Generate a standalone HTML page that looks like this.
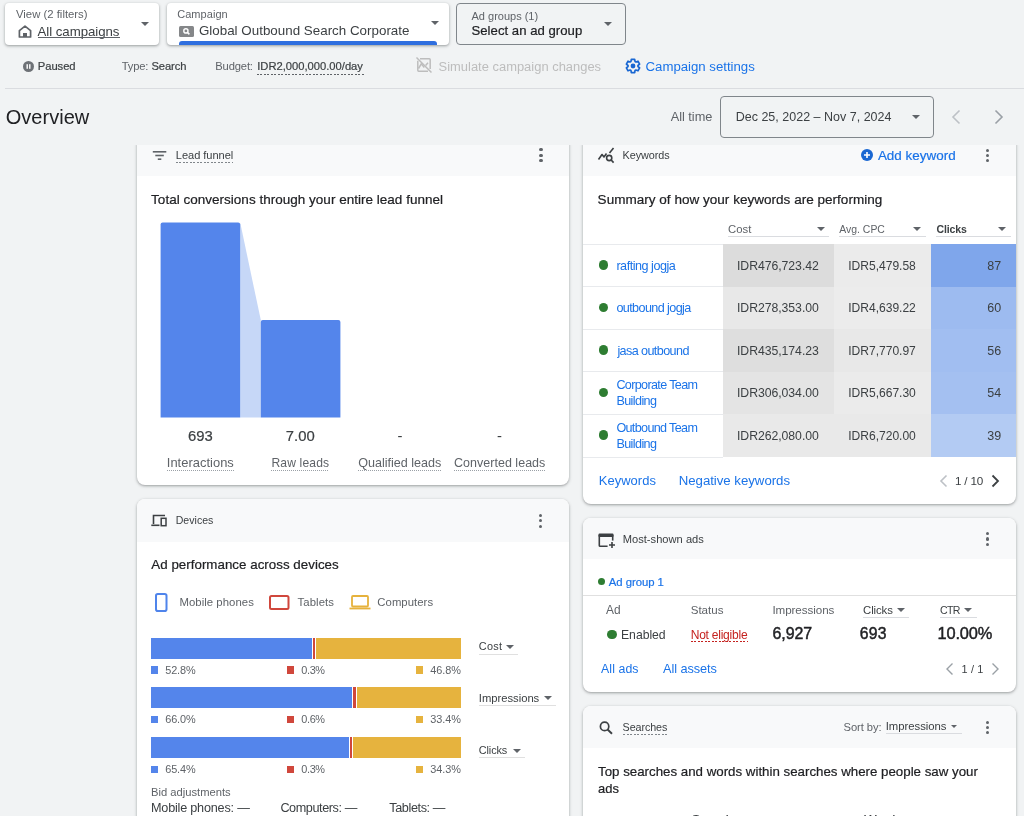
<!DOCTYPE html>
<html><head><meta charset="utf-8">
<style>
*{box-sizing:border-box;margin:0;padding:0}
html,body{width:1024px;height:816px;overflow:hidden;background:#f1f3f4;font-family:"Liberation Sans",sans-serif;color:#202124;-webkit-font-smoothing:antialiased}
#w{position:absolute;left:0;top:0;width:1024px;height:816px;will-change:transform}
.a{position:absolute}
.t{position:absolute;white-space:nowrap;line-height:1}
</style></head><body>
<div id="w"><div class="a" style="left:5px;top:3px;width:154px;height:42px;background:#fff;border-radius:4px;box-shadow:0 1px 2px 0 rgba(60,64,67,.3),0 1px 3px 1px rgba(60,64,67,.15);"></div>
<div class="t" style="left:16.00px;top:9.00px;font-size:11.34px;color:#5f6368;">View (2 filters)</div>
<svg class="a" style="left:18px;top:25px" width="14" height="13" viewBox="0 0 14 13"><path d="M7 1.2 L12.6 5.6 V12 H1.4 V5.6 Z" fill="none" stroke="#5f6368" stroke-width="1.7" stroke-linejoin="round"/><rect x="5" y="8" width="4" height="4" fill="#5f6368"/></svg>
<div class="t" style="left:37.60px;top:25.00px;font-size:13.24px;color:#3c4043;letter-spacing:-0.050px;">All campaigns</div>
<div class="a" style="left:37.6px;top:36.6px;width:82.4px;height:1px;background:#5f6368"></div>
<div class="a" style="left:141px;top:21.6px;width:0;height:0;border-left:4.349999999999994px solid transparent;border-right:4.349999999999994px solid transparent;border-top:4.349999999999994px solid #5f6368"></div>
<div class="a" style="left:167px;top:3px;width:282px;height:42px;background:#fff;border-radius:4px;overflow:hidden;box-shadow:0 1px 2px 0 rgba(60,64,67,.3),0 1px 3px 1px rgba(60,64,67,.15);"><div style="position:absolute;left:12px;width:258px;top:38.0px;height:6px;background:#2f6fdf;border-radius:3px 3px 0 0"></div></div>
<div class="t" style="left:177.20px;top:9.00px;font-size:10.99px;color:#5f6368;letter-spacing:0.057px;">Campaign</div>
<div class="a" style="left:179px;top:26px;width:14.5px;height:10.6px;background:#858789;border-radius:1.5px"></div>
<svg class="a" style="left:182px;top:27px" width="9" height="9" viewBox="0 0 9 9"><circle cx="3.9" cy="3.9" r="2.1" fill="none" stroke="#fff" stroke-width="1.4"/><path d="M5.4 5.4 L7.4 7.4" stroke="#fff" stroke-width="1.5"/></svg>
<div class="t" style="left:198.90px;top:24.00px;font-size:13.37px;color:#3c4043;letter-spacing:0.013px;">Global Outbound Search Corporate</div>
<div class="a" style="left:430.7px;top:21.1px;width:0;height:0;border-left:4.400000000000006px solid transparent;border-right:4.400000000000006px solid transparent;border-top:4.400000000000006px solid #5f6368"></div>
<div class="a" style="left:456.4px;top:2.6px;width:169.6px;height:42.1px;background:transparent;border:1px solid #80868b;border-radius:4px;"></div>
<div class="t" style="left:471.50px;top:11.00px;font-size:11.01px;color:#5f6368;">Ad groups (1)</div>
<div class="t" style="left:471.50px;top:24.00px;font-size:13.13px;color:#202124;letter-spacing:0.029px;-webkit-text-stroke:0.2px #202124;">Select an ad group</div>
<div class="a" style="left:603.6px;top:21.5px;width:0;height:0;border-left:4.0px solid transparent;border-right:4.0px solid transparent;border-top:4.0px solid #5f6368"></div>
<svg class="a" style="left:23px;top:61px" width="11" height="11" viewBox="0 0 11 11"><circle cx="5.5" cy="5.5" r="5.5" fill="#6d7176"/><rect x="3.5" y="3.2" width="1.4" height="4.6" fill="#fff"/><rect x="6.1" y="3.2" width="1.4" height="4.6" fill="#fff"/></svg>
<div class="t" style="left:37.80px;top:61.00px;font-size:11.22px;color:#3c4043;letter-spacing:-0.060px;-webkit-text-stroke:0.2px #3c4043;">Paused</div>
<div class="t" style="left:121.80px;top:61.00px;font-size:11.19px;color:#5f6368;letter-spacing:-0.200px;">Type:</div>
<div class="t" style="left:151.50px;top:61.00px;font-size:11.19px;color:#3c4043;letter-spacing:-0.100px;-webkit-text-stroke:0.2px #3c4043;">Search</div>
<div class="t" style="left:215.30px;top:61.00px;font-size:11.19px;color:#5f6368;letter-spacing:-0.150px;">Budget:</div>
<div class="t" style="left:257.20px;top:61.00px;font-size:11.19px;color:#3c4043;-webkit-text-stroke:0.2px #3c4043;">IDR2,000,000.00/day</div>
<div class="a" style="left:257px;top:74.2px;width:106.5px;height:1px;background:repeating-linear-gradient(90deg,#5f6368 0 2px,transparent 2px 3.5px)"></div>
<svg class="a" style="left:415px;top:56px" width="18" height="18" viewBox="0 0 18 18"><path d="M5 2.8 H14.3 Q15.2 2.8 15.2 3.7 V13" fill="none" stroke="#bdbdbd" stroke-width="1.5"/><path d="M2.8 4.8 V14.3 Q2.8 15.2 3.7 15.2 H13" fill="none" stroke="#bdbdbd" stroke-width="1.5"/><path d="M1.5 1.5 L16.5 16.5" stroke="#bdbdbd" stroke-width="1.5"/><path d="M3.5 12.5 L6.3 7.8 L9.3 11.5 M10.6 9.5 L13 6.8" fill="none" stroke="#bdbdbd" stroke-width="1.5"/></svg>
<div class="t" style="left:438.60px;top:61.00px;font-size:12.92px;color:#bdbdbd;letter-spacing:0.013px;">Simulate campaign changes</div>
<svg class="a" style="left:624.5px;top:58.3px" width="16" height="16" viewBox="0 0 16 16"><path d="M5.97 3.43 L6.33 1.30 L9.67 1.30 L10.03 3.43 L10.94 3.95 L12.96 3.21 L14.63 6.10 L12.97 7.48 L12.97 8.52 L14.63 9.90 L12.96 12.79 L10.94 12.05 L10.03 12.57 L9.67 14.70 L6.33 14.70 L5.97 12.57 L5.06 12.05 L3.04 12.79 L1.37 9.90 L3.03 8.52 L3.03 7.48 L1.37 6.10 L3.04 3.21 L5.06 3.95 Z" fill="none" stroke="#1967d2" stroke-width="1.7" stroke-linejoin="round"/><circle cx="8" cy="8" r="2.4" fill="#1967d2"/></svg>
<div class="t" style="left:645.60px;top:60.00px;font-size:13.22px;color:#1a73e8;letter-spacing:-0.019px;">Campaign settings</div>
<div class="a" style="left:5px;top:88px;width:1019px;height:1px;background:#dadce0"></div>
<div class="t" style="left:5.70px;top:107.00px;font-size:20.01px;color:#202124;letter-spacing:0.029px;">Overview</div>
<div class="t" style="left:670.70px;top:111.00px;font-size:12.76px;color:#5f6368;letter-spacing:-0.014px;">All time</div>
<div class="a" style="left:720.4px;top:96px;width:214px;height:41.6px;background:transparent;border:1px solid #80868b;border-radius:4px;"></div>
<div class="t" style="left:735.70px;top:111.00px;font-size:12.49px;color:#3c4043;letter-spacing:0.012px;">Dec 25, 2022 – Nov 7, 2024</div>
<div class="a" style="left:911.7px;top:115.2px;width:0;height:0;border-left:4.7999999999999545px solid transparent;border-right:4.7999999999999545px solid transparent;border-top:4.7999999999999545px solid #5f6368"></div>
<svg class="a" style="left:950px;top:109px" width="12" height="16" viewBox="0 0 12 16"><path d="M9.5 1.5 L3 8 L9.5 14.5" fill="none" stroke="#bdc1c6" stroke-width="1.6"/></svg>
<svg class="a" style="left:993px;top:109px" width="12" height="16" viewBox="0 0 12 16"><path d="M2.5 1.5 L9 8 L2.5 14.5" fill="none" stroke="#9aa0a6" stroke-width="1.6"/></svg>
<div class="a" style="left:0;top:0;width:1024px;height:816px;clip-path:inset(145px 0 0 0)">
<div class="a" style="left:136.5px;top:137px;width:432.5px;height:347.5px;background:#fff;border-radius:8px;overflow:hidden;box-shadow:0 1px 2px 0 rgba(60,64,67,.3),0 1px 3px 1px rgba(60,64,67,.15);"></div>
<div class="a" style="left:136.5px;top:137px;width:432.5px;height:39px;background:#f8f9fa;border-radius:8px 8px 0 0;"></div>
<svg class="a" style="left:152px;top:150px" width="15" height="11" viewBox="0 0 15 11"><rect x="0.8" y="1" width="13.5" height="1.6" fill="#5f6368"/><rect x="3.3" y="4.7" width="8.5" height="1.6" fill="#5f6368"/><rect x="5.8" y="8.4" width="3.5" height="1.6" fill="#5f6368"/></svg>
<div class="t" style="left:175.80px;top:150.00px;font-size:11.07px;color:#3c4043;letter-spacing:-0.040px;">Lead funnel</div>
<div class="a" style="left:175.8px;top:161.5px;width:57.599999999999994px;height:1px;background:repeating-linear-gradient(90deg,#80868b 0 2px,transparent 2px 3.5px)"></div>
<div class="a" style="left:539.45px;top:148.40px;width:3.1px;height:3.1px;border-radius:50%;background:#5f6368"></div>
<div class="a" style="left:539.45px;top:153.65px;width:3.1px;height:3.1px;border-radius:50%;background:#5f6368"></div>
<div class="a" style="left:539.45px;top:158.90px;width:3.1px;height:3.1px;border-radius:50%;background:#5f6368"></div>
<div class="t" style="left:151.10px;top:193.00px;font-size:13.51px;color:#202124;letter-spacing:0.015px;-webkit-text-stroke:0.2px #202124;">Total conversions through your entire lead funnel</div>
<svg class="a" style="left:0;top:0" width="1024" height="816"><path d="M240.2 222.6 L260.8 320.1 L260.8 417.6 L240.2 417.6 Z" fill="#c6d7f7"/><path d="M160.6 417.6 V224.6 Q160.6 222.6 162.6 222.6 H238.2 Q240.2 222.6 240.2 224.6 V417.6 Z" fill="#5485eb"/><path d="M260.8 417.6 V322.1 Q260.8 320.1 262.8 320.1 H338.4 Q340.4 320.1 340.4 322.1 V417.6 Z" fill="#5485eb"/></svg>
<div class="t" style="left:187.90px;top:429.00px;font-size:14.83px;color:#3c4043;-webkit-text-stroke:0.2px #3c4043;">693</div>
<div class="t" style="left:285.80px;top:429.00px;font-size:14.83px;color:#3c4043;-webkit-text-stroke:0.2px #3c4043;">7.00</div>
<div class="t" style="left:397.50px;top:429.00px;font-size:14.83px;color:#3c4043;">-</div>
<div class="t" style="left:496.90px;top:429.00px;font-size:14.83px;color:#3c4043;">-</div>
<div class="t" style="left:166.80px;top:457.00px;font-size:12.93px;color:#5f6368;letter-spacing:0.018px;">Interactions</div>
<div class="a" style="left:166.8px;top:469.5px;width:67.19999999999999px;height:1px;background:repeating-linear-gradient(90deg,#9aa0a6 0 1px,transparent 1px 2px)"></div>
<div class="t" style="left:271.40px;top:457.00px;font-size:12.09px;color:#5f6368;letter-spacing:0.163px;">Raw leads</div>
<div class="a" style="left:271.4px;top:469.5px;width:57.30000000000001px;height:1px;background:repeating-linear-gradient(90deg,#9aa0a6 0 1px,transparent 1px 2px)"></div>
<div class="t" style="left:358.30px;top:457.00px;font-size:12.59px;color:#5f6368;letter-spacing:-0.021px;">Qualified leads</div>
<div class="a" style="left:358.3px;top:469.5px;width:83.69999999999999px;height:1px;background:repeating-linear-gradient(90deg,#9aa0a6 0 1px,transparent 1px 2px)"></div>
<div class="t" style="left:454.00px;top:457.00px;font-size:12.47px;color:#5f6368;letter-spacing:0.036px;">Converted leads</div>
<div class="a" style="left:454px;top:469.5px;width:91.5px;height:1px;background:repeating-linear-gradient(90deg,#9aa0a6 0 1px,transparent 1px 2px)"></div>
<div class="a" style="left:582.5px;top:137px;width:433.5px;height:366.5px;background:#fff;border-radius:8px;overflow:hidden;box-shadow:0 1px 2px 0 rgba(60,64,67,.3),0 1px 3px 1px rgba(60,64,67,.15);"></div>
<div class="a" style="left:582.5px;top:137px;width:433.5px;height:39px;background:#f8f9fa;border-radius:8px 8px 0 0;"></div>
<svg class="a" style="left:597px;top:147px" width="19" height="17" viewBox="0 0 19 17"><path d="M1.5 12.5 L5 7.5 L7 10 L9.5 6.5" fill="none" stroke="#3c4043" stroke-width="1.6" stroke-linejoin="round"/><path d="M12.5 6 L16.5 1" fill="none" stroke="#3c4043" stroke-width="1.6"/><circle cx="12.2" cy="11" r="2.6" fill="none" stroke="#3c4043" stroke-width="1.6"/><path d="M14.2 13 L16.6 15.6" stroke="#3c4043" stroke-width="1.7"/></svg>
<div class="t" style="left:622.50px;top:150.00px;font-size:10.82px;color:#3c4043;letter-spacing:-0.043px;">Keywords</div>
<svg class="a" style="left:860.5px;top:149px" width="12" height="12" viewBox="0 0 12 12"><circle cx="6" cy="6" r="6" fill="#1967d2"/><path d="M6 3 V9 M3 6 H9" stroke="#fff" stroke-width="1.6"/></svg>
<div class="t" style="left:877.90px;top:149.00px;font-size:13.41px;color:#1a73e8;letter-spacing:0.020px;-webkit-text-stroke:0.2px #1a73e8;">Add keyword</div>
<div class="a" style="left:985.95px;top:148.60px;width:3.1px;height:3.1px;border-radius:50%;background:#5f6368"></div>
<div class="a" style="left:985.95px;top:153.65px;width:3.1px;height:3.1px;border-radius:50%;background:#5f6368"></div>
<div class="a" style="left:985.95px;top:158.70px;width:3.1px;height:3.1px;border-radius:50%;background:#5f6368"></div>
<div class="t" style="left:597.60px;top:193.00px;font-size:13.52px;color:#202124;letter-spacing:0.017px;-webkit-text-stroke:0.2px #202124;">Summary of how your keywords are performing</div>
<div class="t" style="left:728.00px;top:224.00px;font-size:11.34px;color:#5f6368;">Cost</div>
<div class="a" style="left:728px;top:236px;width:100.60000000000002px;height:1px;background:#dadce0"></div>
<div class="a" style="left:816.8px;top:226.8px;width:0;height:0;border-left:4.100000000000023px solid transparent;border-right:4.100000000000023px solid transparent;border-top:4.100000000000023px solid #5f6368"></div>
<div class="t" style="left:839.30px;top:225.00px;font-size:10.43px;color:#5f6368;">Avg. CPC</div>
<div class="a" style="left:839px;top:236px;width:86.70000000000005px;height:1px;background:#dadce0"></div>
<div class="a" style="left:913px;top:226.8px;width:0;height:0;border-left:4.25px solid transparent;border-right:4.25px solid transparent;border-top:4.25px solid #5f6368"></div>
<div class="t" style="left:936.40px;top:224.00px;font-size:10.51px;color:#3c4043;letter-spacing:-0.080px;font-weight:bold;">Clicks</div>
<div class="a" style="left:936px;top:236px;width:74.5px;height:1px;background:#dadce0"></div>
<div class="a" style="left:998px;top:226.8px;width:0;height:0;border-left:4.5px solid transparent;border-right:4.5px solid transparent;border-top:4.5px solid #5f6368"></div>
<div class="a" style="left:582.5px;top:243.5px;width:433.5px;height:1px;background:#e8eaed"></div>
<div class="a" style="left:722.7px;top:244.0px;width:111px;height:42.7px;background:#dcdcdc;"></div>
<div class="a" style="left:833.7px;top:244.0px;width:97.3px;height:42.7px;background:#ebebeb;"></div>
<div class="a" style="left:931px;top:244.0px;width:85px;height:42.7px;background:#7fa6eb;"></div>
<div class="a" style="left:598.60px;top:259.90px;width:9.8px;height:9.8px;border-radius:50%;background:#2e7d32"></div>
<div class="t" style="left:616.40px;top:260.00px;font-size:12.60px;color:#1a73e8;letter-spacing:-0.475px;">rafting jogja</div>
<div class="t" style="left:737.00px;top:260.00px;font-size:12.26px;color:#3c4043;letter-spacing:-0.050px;">IDR476,723.42</div>
<div class="t" style="left:848.30px;top:260.00px;font-size:12.09px;color:#3c4043;letter-spacing:-0.030px;">IDR5,479.58</div>
<div class="t" style="left:987.30px;top:260.00px;font-size:12.50px;color:#3c4043;">87</div>
<div class="a" style="left:722.7px;top:286.6px;width:111px;height:42.7px;background:#e8e8e8;"></div>
<div class="a" style="left:833.7px;top:286.6px;width:97.3px;height:42.7px;background:#ececec;"></div>
<div class="a" style="left:931px;top:286.6px;width:85px;height:42.7px;background:#9dbbf0;"></div>
<div class="a" style="left:582.5px;top:286.1px;width:140.20000000000005px;height:1px;background:#e8eaed"></div>
<div class="a" style="left:598.60px;top:302.50px;width:9.8px;height:9.8px;border-radius:50%;background:#2e7d32"></div>
<div class="t" style="left:616.40px;top:302.00px;font-size:12.60px;color:#1a73e8;letter-spacing:-0.592px;">outbound jogja</div>
<div class="t" style="left:737.00px;top:302.00px;font-size:12.26px;color:#3c4043;letter-spacing:-0.050px;">IDR278,353.00</div>
<div class="t" style="left:848.30px;top:302.00px;font-size:12.09px;color:#3c4043;letter-spacing:-0.030px;">IDR4,639.22</div>
<div class="t" style="left:987.30px;top:302.00px;font-size:12.50px;color:#3c4043;">60</div>
<div class="a" style="left:722.7px;top:329.2px;width:111px;height:42.7px;background:#dedede;"></div>
<div class="a" style="left:833.7px;top:329.2px;width:97.3px;height:42.7px;background:#e8e8e8;"></div>
<div class="a" style="left:931px;top:329.2px;width:85px;height:42.7px;background:#a1bef1;"></div>
<div class="a" style="left:582.5px;top:328.7px;width:140.20000000000005px;height:1px;background:#e8eaed"></div>
<div class="a" style="left:598.60px;top:345.10px;width:9.8px;height:9.8px;border-radius:50%;background:#2e7d32"></div>
<div class="t" style="left:617.40px;top:345.00px;font-size:12.60px;color:#1a73e8;letter-spacing:-0.592px;">jasa outbound</div>
<div class="t" style="left:737.00px;top:345.00px;font-size:12.26px;color:#3c4043;letter-spacing:-0.050px;">IDR435,174.23</div>
<div class="t" style="left:848.30px;top:345.00px;font-size:12.09px;color:#3c4043;letter-spacing:-0.030px;">IDR7,770.97</div>
<div class="t" style="left:987.30px;top:345.00px;font-size:12.50px;color:#3c4043;">56</div>
<div class="a" style="left:722.7px;top:371.8px;width:111px;height:42.7px;background:#e4e4e4;"></div>
<div class="a" style="left:833.7px;top:371.8px;width:97.3px;height:42.7px;background:#ebebeb;"></div>
<div class="a" style="left:931px;top:371.8px;width:85px;height:42.7px;background:#a4c0f1;"></div>
<div class="a" style="left:582.5px;top:371.3px;width:140.20000000000005px;height:1px;background:#e8eaed"></div>
<div class="a" style="left:598.60px;top:387.70px;width:9.8px;height:9.8px;border-radius:50%;background:#2e7d32"></div>
<div class="t" style="left:616.40px;top:379.00px;font-size:12.60px;color:#1a73e8;letter-spacing:-0.646px;">Corporate Team</div>
<div class="t" style="left:616.40px;top:395.00px;font-size:12.60px;color:#1a73e8;letter-spacing:-0.600px;">Building</div>
<div class="t" style="left:737.00px;top:387.00px;font-size:12.26px;color:#3c4043;letter-spacing:-0.050px;">IDR306,034.00</div>
<div class="t" style="left:848.30px;top:387.00px;font-size:12.09px;color:#3c4043;letter-spacing:-0.030px;">IDR5,667.30</div>
<div class="t" style="left:987.30px;top:387.00px;font-size:12.50px;color:#3c4043;">54</div>
<div class="a" style="left:722.7px;top:414.4px;width:111px;height:42.7px;background:#e9e9e9;"></div>
<div class="a" style="left:833.7px;top:414.4px;width:97.3px;height:42.7px;background:#e9e9e9;"></div>
<div class="a" style="left:931px;top:414.4px;width:85px;height:42.7px;background:#b3cbf3;"></div>
<div class="a" style="left:582.5px;top:413.9px;width:140.20000000000005px;height:1px;background:#e8eaed"></div>
<div class="a" style="left:598.60px;top:430.30px;width:9.8px;height:9.8px;border-radius:50%;background:#2e7d32"></div>
<div class="t" style="left:616.40px;top:422.00px;font-size:12.60px;color:#1a73e8;letter-spacing:-0.658px;">Outbound Team</div>
<div class="t" style="left:616.40px;top:438.00px;font-size:12.60px;color:#1a73e8;letter-spacing:-0.600px;">Building</div>
<div class="t" style="left:737.00px;top:430.00px;font-size:12.26px;color:#3c4043;letter-spacing:-0.050px;">IDR262,080.00</div>
<div class="t" style="left:848.30px;top:430.00px;font-size:12.09px;color:#3c4043;letter-spacing:-0.030px;">IDR6,720.00</div>
<div class="t" style="left:987.30px;top:430.00px;font-size:12.50px;color:#3c4043;">39</div>
<div class="a" style="left:582.5px;top:457px;width:140.20000000000005px;height:1px;background:#e8eaed"></div>
<div class="t" style="left:598.80px;top:475.00px;font-size:12.96px;color:#1a73e8;letter-spacing:0.029px;">Keywords</div>
<div class="t" style="left:678.70px;top:474.00px;font-size:13.22px;color:#1a73e8;letter-spacing:-0.019px;">Negative keywords</div>
<svg class="a" style="left:938px;top:474px" width="11" height="14" viewBox="0 0 11 14"><path d="M8.5 1.5 L3 7 L8.5 12.5" fill="none" stroke="#bdc1c6" stroke-width="1.6"/></svg>
<div class="t" style="left:955.00px;top:475.00px;font-size:11.69px;color:#3c4043;letter-spacing:-0.200px;">1 / 10</div>
<svg class="a" style="left:990px;top:474px" width="11" height="14" viewBox="0 0 11 14"><path d="M2.5 1.5 L8 7 L2.5 12.5" fill="none" stroke="#3c4043" stroke-width="1.8"/></svg>
<div class="a" style="left:136.5px;top:499.2px;width:432.5px;height:340px;background:#fff;border-radius:8px;overflow:hidden;box-shadow:0 1px 2px 0 rgba(60,64,67,.3),0 1px 3px 1px rgba(60,64,67,.15);"></div>
<div class="a" style="left:136.5px;top:499.2px;width:432.5px;height:42.5px;background:#f8f9fa;border-radius:8px 8px 0 0;"></div>
<svg class="a" style="left:151px;top:514px" width="16" height="13" viewBox="0 0 16 13"><path d="M2.5 10 V1.5 H14" fill="none" stroke="#3c4043" stroke-width="1.6"/><path d="M0.3 11.3 H8.5" stroke="#3c4043" stroke-width="1.6"/><rect x="10.2" y="4.3" width="4.8" height="7.4" fill="none" stroke="#3c4043" stroke-width="1.5"/></svg>
<div class="t" style="left:175.70px;top:515.00px;font-size:10.56px;color:#3c4043;letter-spacing:0.033px;">Devices</div>
<div class="a" style="left:539.05px;top:513.70px;width:3.1px;height:3.1px;border-radius:50%;background:#5f6368"></div>
<div class="a" style="left:539.05px;top:519.20px;width:3.1px;height:3.1px;border-radius:50%;background:#5f6368"></div>
<div class="a" style="left:539.05px;top:524.70px;width:3.1px;height:3.1px;border-radius:50%;background:#5f6368"></div>
<div class="t" style="left:151.30px;top:558.00px;font-size:13.34px;color:#202124;letter-spacing:0.025px;-webkit-text-stroke:0.2px #202124;">Ad performance across devices</div>
<svg class="a" style="left:155px;top:592.5px" width="13" height="19" viewBox="0 0 13 19"><rect x="1" y="1" width="10.5" height="17" rx="1.8" fill="none" stroke="#4f84eb" stroke-width="2"/></svg>
<div class="t" style="left:179.40px;top:597.00px;font-size:11.37px;color:#5f6368;letter-spacing:0.050px;">Mobile phones</div>
<svg class="a" style="left:269px;top:594.5px" width="21" height="15" viewBox="0 0 21 15"><rect x="1" y="1" width="18.5" height="13" rx="1.5" fill="none" stroke="#d0473c" stroke-width="2"/></svg>
<div class="t" style="left:297.60px;top:597.00px;font-size:11.34px;color:#5f6368;letter-spacing:0.067px;">Tablets</div>
<svg class="a" style="left:348.5px;top:595px" width="22" height="15" viewBox="0 0 22 15"><rect x="3" y="1" width="16" height="10.5" rx="1" fill="none" stroke="#e6b23c" stroke-width="1.8"/><rect x="0.5" y="12.6" width="21" height="1.8" fill="#e6b23c"/></svg>
<div class="t" style="left:377.30px;top:597.00px;font-size:11.34px;color:#5f6368;letter-spacing:0.050px;">Computers</div>
<div class="a" style="left:151.3px;top:638px;width:160.7px;height:20.899999999999977px;background:#5485eb;"></div>
<div class="a" style="left:312px;top:638px;width:3.5px;height:20.899999999999977px;background:#fff;"></div>
<div class="a" style="left:312.8px;top:638px;width:1.9px;height:20.899999999999977px;background:#d0473c;"></div>
<div class="a" style="left:315.5px;top:638px;width:145.60000000000002px;height:20.899999999999977px;background:#e6b33e;"></div>
<div class="a" style="left:150.7px;top:666.3000000000001px;width:7.3px;height:7.3px;background:#5485eb;"></div>
<div class="t" style="left:165.20px;top:665.00px;font-size:10.90px;color:#5f6368;letter-spacing:-0.100px;">52.8%</div>
<div class="a" style="left:287px;top:666.3000000000001px;width:7.3px;height:7.3px;background:#d0473c;"></div>
<div class="t" style="left:301.30px;top:665.00px;font-size:10.90px;color:#5f6368;letter-spacing:-0.367px;">0.3%</div>
<div class="a" style="left:415.8px;top:666.3000000000001px;width:7.3px;height:7.3px;background:#e6b33e;"></div>
<div class="t" style="left:430.30px;top:665.00px;font-size:10.90px;color:#5f6368;letter-spacing:-0.050px;">46.8%</div>
<div class="t" style="left:478.80px;top:641.00px;font-size:10.90px;color:#3c4043;letter-spacing:0.267px;">Cost</div>
<div class="a" style="left:506px;top:644.9000000000001px;width:0;height:0;border-left:4.0px solid transparent;border-right:4.0px solid transparent;border-top:4.0px solid #5f6368"></div>
<div class="a" style="left:478.8px;top:653.8000000000001px;width:38.900000000000034px;height:1px;background:#e0e0e0"></div>
<div class="a" style="left:151.3px;top:687.4px;width:200.7px;height:21.0px;background:#5485eb;"></div>
<div class="a" style="left:352px;top:687.4px;width:4.5px;height:21.0px;background:#fff;"></div>
<div class="a" style="left:352.8px;top:687.4px;width:2.9px;height:21.0px;background:#d0473c;"></div>
<div class="a" style="left:356.5px;top:687.4px;width:104.60000000000002px;height:21.0px;background:#e6b33e;"></div>
<div class="a" style="left:150.7px;top:715.8000000000001px;width:7.3px;height:7.3px;background:#5485eb;"></div>
<div class="t" style="left:165.20px;top:714.00px;font-size:10.90px;color:#5f6368;letter-spacing:-0.100px;">66.0%</div>
<div class="a" style="left:287px;top:715.8000000000001px;width:7.3px;height:7.3px;background:#d0473c;"></div>
<div class="t" style="left:301.30px;top:714.00px;font-size:10.90px;color:#5f6368;letter-spacing:-0.367px;">0.6%</div>
<div class="a" style="left:415.8px;top:715.8000000000001px;width:7.3px;height:7.3px;background:#e6b33e;"></div>
<div class="t" style="left:430.30px;top:714.00px;font-size:10.90px;color:#5f6368;letter-spacing:-0.050px;">33.4%</div>
<div class="t" style="left:478.80px;top:693.00px;font-size:11.25px;color:#3c4043;letter-spacing:-0.020px;">Impressions</div>
<div class="a" style="left:544px;top:696.4000000000001px;width:0;height:0;border-left:4.0px solid transparent;border-right:4.0px solid transparent;border-top:4.0px solid #5f6368"></div>
<div class="a" style="left:478.8px;top:705.3000000000001px;width:76.99999999999994px;height:1px;background:#e0e0e0"></div>
<div class="a" style="left:151.3px;top:736.9px;width:197.8px;height:21.300000000000068px;background:#5485eb;"></div>
<div class="a" style="left:349.1px;top:736.9px;width:3.8999999999999773px;height:21.300000000000068px;background:#fff;"></div>
<div class="a" style="left:349.90000000000003px;top:736.9px;width:2.299999999999977px;height:21.300000000000068px;background:#d0473c;"></div>
<div class="a" style="left:353px;top:736.9px;width:108.10000000000002px;height:21.300000000000068px;background:#e6b33e;"></div>
<div class="a" style="left:150.7px;top:765.6000000000001px;width:7.3px;height:7.3px;background:#5485eb;"></div>
<div class="t" style="left:165.20px;top:764.00px;font-size:10.90px;color:#5f6368;letter-spacing:-0.100px;">65.4%</div>
<div class="a" style="left:287px;top:765.6000000000001px;width:7.3px;height:7.3px;background:#d0473c;"></div>
<div class="t" style="left:301.30px;top:764.00px;font-size:10.90px;color:#5f6368;letter-spacing:-0.367px;">0.3%</div>
<div class="a" style="left:415.8px;top:765.6000000000001px;width:7.3px;height:7.3px;background:#e6b33e;"></div>
<div class="t" style="left:430.30px;top:764.00px;font-size:10.90px;color:#5f6368;letter-spacing:-0.050px;">34.3%</div>
<div class="t" style="left:478.80px;top:745.00px;font-size:10.90px;color:#3c4043;letter-spacing:-0.120px;">Clicks</div>
<div class="a" style="left:512.9px;top:748.5px;width:0;height:0;border-left:4.0px solid transparent;border-right:4.0px solid transparent;border-top:4.0px solid #5f6368"></div>
<div class="a" style="left:478.8px;top:757.4px;width:46.19999999999999px;height:1px;background:#e0e0e0"></div>
<div class="t" style="left:151.00px;top:787.00px;font-size:11.20px;color:#5f6368;">Bid adjustments</div>
<div class="t" style="left:151.00px;top:802.00px;font-size:12.65px;color:#3c4043;letter-spacing:-0.207px;">Mobile phones: —</div>
<div class="t" style="left:280.40px;top:802.00px;font-size:12.65px;color:#3c4043;letter-spacing:-0.418px;">Computers: —</div>
<div class="t" style="left:389.30px;top:802.00px;font-size:12.65px;color:#3c4043;letter-spacing:-0.389px;">Tablets: —</div>
<div class="a" style="left:582.5px;top:518.1px;width:433.5px;height:173.6px;background:#fff;border-radius:8px;overflow:hidden;box-shadow:0 1px 2px 0 rgba(60,64,67,.3),0 1px 3px 1px rgba(60,64,67,.15);"></div>
<div class="a" style="left:582.5px;top:518.1px;width:433.5px;height:41.3px;background:#f8f9fa;border-radius:8px 8px 0 0;"></div>
<svg class="a" style="left:597.5px;top:532.5px" width="18" height="15" viewBox="0 0 18 15"><rect x="0.5" y="0.5" width="15" height="3.4" rx="1" fill="#3c4043"/><path d="M1.3 2 V12.4 Q1.3 13.2 2.1 13.2 H9.6" fill="none" stroke="#3c4043" stroke-width="1.6"/><path d="M14.7 2 V7.6" fill="none" stroke="#3c4043" stroke-width="1.6"/><path d="M14 9 V15 M11 12 H17" stroke="#3c4043" stroke-width="1.6"/></svg>
<div class="t" style="left:622.70px;top:534.00px;font-size:11.11px;color:#3c4043;letter-spacing:0.023px;">Most-shown ads</div>
<div class="a" style="left:985.95px;top:532.00px;width:3.1px;height:3.1px;border-radius:50%;background:#5f6368"></div>
<div class="a" style="left:985.95px;top:537.45px;width:3.1px;height:3.1px;border-radius:50%;background:#5f6368"></div>
<div class="a" style="left:985.95px;top:542.90px;width:3.1px;height:3.1px;border-radius:50%;background:#5f6368"></div>
<div class="a" style="left:597.60px;top:578.00px;width:7px;height:7px;border-radius:50%;background:#2e7d32"></div>
<div class="t" style="left:608.80px;top:577.00px;font-size:11.34px;color:#1a73e8;letter-spacing:-0.033px;-webkit-text-stroke:0.2px #1a73e8;">Ad group 1</div>
<div class="a" style="left:582.5px;top:595px;width:433.5px;height:1px;background:#e0e0e0"></div>
<div class="t" style="left:606.00px;top:605.00px;font-size:11.92px;color:#5f6368;">Ad</div>
<div class="t" style="left:690.70px;top:605.00px;font-size:11.57px;color:#5f6368;">Status</div>
<div class="t" style="left:772.40px;top:604.00px;font-size:11.62px;color:#5f6368;letter-spacing:-0.060px;">Impressions</div>
<div class="t" style="left:863.10px;top:605.00px;font-size:11.36px;color:#3c4043;letter-spacing:-0.100px;">Clicks</div>
<div class="a" style="left:896.6px;top:608px;width:0;height:0;border-left:4.550000000000011px solid transparent;border-right:4.550000000000011px solid transparent;border-top:4.550000000000011px solid #5f6368"></div>
<div class="a" style="left:863px;top:617px;width:46px;height:1px;background:#dadce0"></div>
<div class="t" style="left:940.00px;top:605.00px;font-size:10.61px;color:#3c4043;letter-spacing:-0.750px;">CTR</div>
<div class="a" style="left:964.4px;top:608px;width:0;height:0;border-left:4.100000000000023px solid transparent;border-right:4.100000000000023px solid transparent;border-top:4.100000000000023px solid #5f6368"></div>
<div class="a" style="left:940px;top:617px;width:36.5px;height:1px;background:#dadce0"></div>
<div class="a" style="left:607.00px;top:629.80px;width:9.6px;height:9.6px;border-radius:50%;background:#2e7d32"></div>
<div class="t" style="left:621.00px;top:629.00px;font-size:12.23px;color:#3c4043;letter-spacing:-0.033px;">Enabled</div>
<div class="t" style="left:690.70px;top:629.00px;font-size:12.06px;color:#c5221f;letter-spacing:-0.245px;">Not eligible</div>
<div class="a" style="left:690.7px;top:641.3px;width:57.299999999999955px;height:1px;background:repeating-linear-gradient(90deg,#c5221f 0 2px,transparent 2px 3.5px)"></div>
<div class="t" style="left:772.40px;top:626.00px;font-size:15.95px;color:#202124;letter-spacing:-0.025px;-webkit-text-stroke:0.45px #202124;">6,927</div>
<div class="t" style="left:859.80px;top:626.00px;font-size:15.69px;color:#202124;letter-spacing:0.250px;-webkit-text-stroke:0.45px #202124;">693</div>
<div class="t" style="left:937.40px;top:625.00px;font-size:16.40px;color:#202124;letter-spacing:-0.120px;-webkit-text-stroke:0.45px #202124;">10.00%</div>
<div class="t" style="left:601.00px;top:663.00px;font-size:12.30px;color:#1a73e8;letter-spacing:0.100px;">All ads</div>
<div class="t" style="left:663.00px;top:663.00px;font-size:12.73px;color:#1a73e8;letter-spacing:-0.056px;">All assets</div>
<svg class="a" style="left:944px;top:662px" width="11" height="14" viewBox="0 0 11 14"><path d="M8.5 1.5 L3 7 L8.5 12.5" fill="none" stroke="#9aa0a6" stroke-width="1.4"/></svg>
<div class="t" style="left:961.60px;top:664.00px;font-size:10.90px;color:#3c4043;letter-spacing:0.100px;">1 / 1</div>
<svg class="a" style="left:989.5px;top:662px" width="11" height="14" viewBox="0 0 11 14"><path d="M2.5 1.5 L8 7 L2.5 12.5" fill="none" stroke="#9aa0a6" stroke-width="1.4"/></svg>
<div class="a" style="left:582.5px;top:706.3px;width:433.5px;height:200px;background:#fff;border-radius:8px;overflow:hidden;box-shadow:0 1px 2px 0 rgba(60,64,67,.3),0 1px 3px 1px rgba(60,64,67,.15);"></div>
<div class="a" style="left:582.5px;top:706.3px;width:433.5px;height:41.6px;background:#f8f9fa;border-radius:8px 8px 0 0;"></div>
<svg class="a" style="left:599px;top:721px" width="15" height="14" viewBox="0 0 15 14"><circle cx="5.6" cy="5.4" r="4.2" fill="none" stroke="#3c4043" stroke-width="1.7"/><path d="M8.6 8.5 L13 12.8" stroke="#3c4043" stroke-width="1.9"/></svg>
<div class="t" style="left:622.60px;top:722.00px;font-size:10.72px;color:#3c4043;letter-spacing:-0.086px;">Searches</div>
<div class="a" style="left:622.6px;top:733.5px;width:45.39999999999998px;height:1px;background:repeating-linear-gradient(90deg,#80868b 0 2px,transparent 2px 3.5px)"></div>
<div class="t" style="left:843.50px;top:722.00px;font-size:11.19px;color:#5f6368;letter-spacing:-0.071px;">Sort by:</div>
<div class="t" style="left:885.70px;top:721.00px;font-size:11.32px;color:#3c4043;letter-spacing:-0.020px;">Impressions</div>
<div class="a" style="left:950.9px;top:724.5px;width:0;height:0;border-left:3.9499999999999886px solid transparent;border-right:3.9499999999999886px solid transparent;border-top:3.9499999999999886px solid #5f6368"></div>
<div class="a" style="left:885.7px;top:733.3px;width:76.69999999999993px;height:1px;background:#dadce0"></div>
<div class="a" style="left:986.15px;top:720.50px;width:3.1px;height:3.1px;border-radius:50%;background:#5f6368"></div>
<div class="a" style="left:986.15px;top:725.65px;width:3.1px;height:3.1px;border-radius:50%;background:#5f6368"></div>
<div class="a" style="left:986.15px;top:730.80px;width:3.1px;height:3.1px;border-radius:50%;background:#5f6368"></div>
<div class="t" style="left:598.00px;top:765.00px;font-size:13.31px;color:#202124;-webkit-text-stroke:0.2px #202124;">Top searches and words within searches where people saw your</div>
<div class="t" style="left:598.00px;top:783.00px;font-size:12.94px;color:#202124;-webkit-text-stroke:0.2px #202124;">ads</div>
<div class="t" style="left:691.70px;top:813.00px;font-size:13.08px;color:#3c4043;-webkit-text-stroke:0.2px #3c4043;">Search</div>
<div class="t" style="left:864.30px;top:813.00px;font-size:13.08px;color:#3c4043;-webkit-text-stroke:0.2px #3c4043;">Words</div>
</div></div>
</body></html>
